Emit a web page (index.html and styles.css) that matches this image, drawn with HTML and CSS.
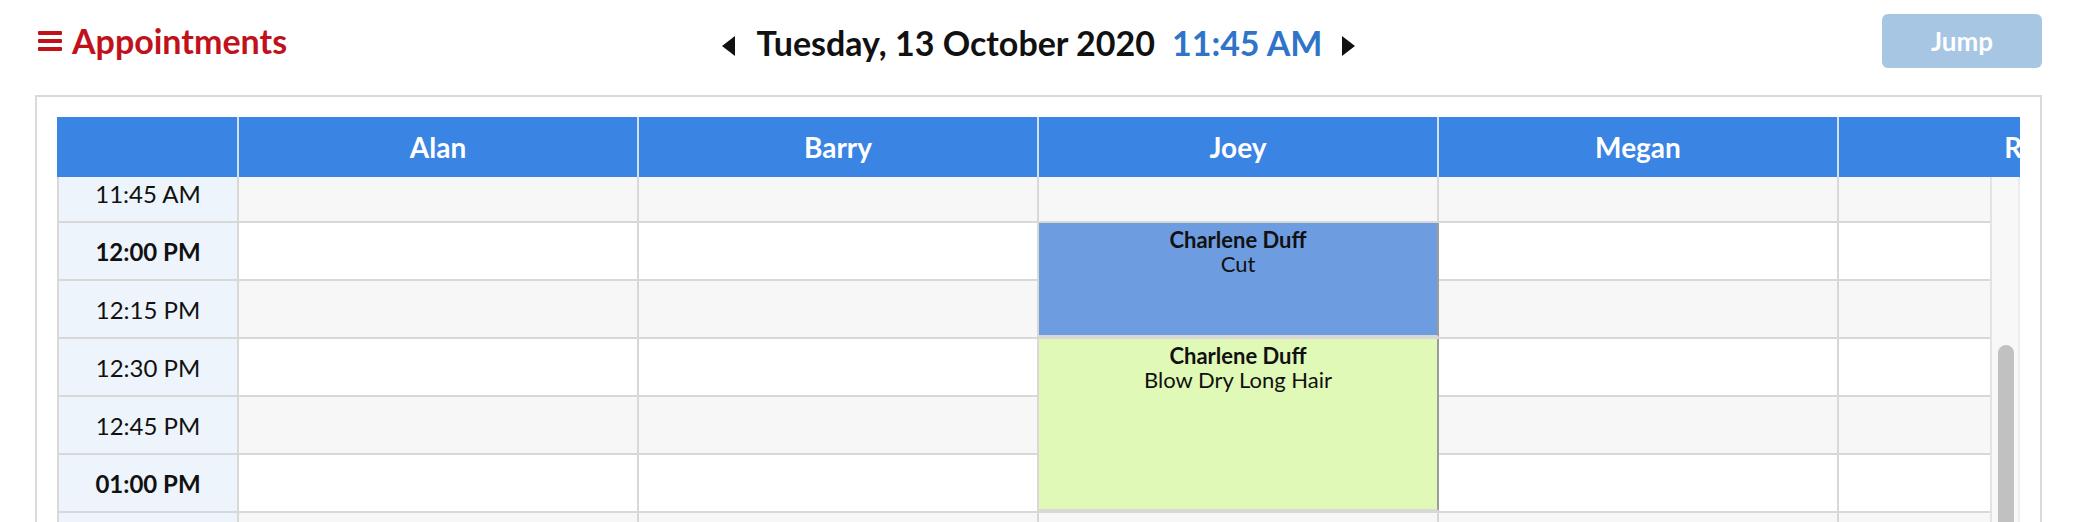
FILE: index.html
```html
<!doctype html>
<html>
<head>
  <title>Appointments</title>
  <meta charset="utf-8">
  <link rel="stylesheet" href="styles.css">
</head>
<body>
  <div id="page">
    <div id="topbar">
      <h1 class="title">
        <svg class="bars" width="24" height="20" viewBox="0 0 24 20"><rect y="0" width="24" height="4" rx="1"/><rect y="8" width="24" height="4" rx="1"/><rect y="16" width="24" height="4" rx="1"/></svg>
        <span>Appointments</span>
      </h1>
      <div class="datenav">
        <a class="arrow" href="#"><svg width="13" height="20" viewBox="0 0 13 20"><path d="M13 0 L0 10 L13 20 Z"/></svg></a><span class="date">Tuesday, 13 October 2020</span><span class="time">11:45 AM</span><a class="arrow" href="#"><svg width="13" height="20" viewBox="0 0 13 20"><path d="M0 0 L13 10 L0 20 Z"/></svg></a>
      </div>
      <div class="actions"><button class="jump" disabled>Jump</button></div>
    </div>
    <div class="calendar">
      <div class="cal-head" id="calHead">
        <div class="head-cell corner"></div>
      </div>
      <div class="cal-body">
        <div class="viewport" id="viewport">
          <div class="times" id="times"></div>
        </div>
        <div class="scrollbar"><div class="thumb" id="thumb"></div></div>
      </div>
    </div>
  </div>
  <script>
    const staff = ["Alan", "Barry", "Joey", "Megan", "Rosie"];
    const appointments = [
      { staff: "Joey", start: 12 * 60, slots: 2, client: "Charlene Duff", service: "Cut", kind: "cut" },
      { staff: "Joey", start: 12 * 60 + 30, slots: 3, client: "Charlene Duff", service: "Blow Dry Long Hair", kind: "blowdry" }
    ];
    const SLOT = 58, FIRST = 9 * 60, COUNT = 48;

    const calHead = document.querySelector("#calHead"),
      viewport = document.querySelector("#viewport"),
      times = viewport.querySelector("#times"),
      thumb = document.querySelector("#thumb");

    function pad(n){
      return n < 10 ? "0" + n : "" + n;
    }

    function label(min){
      const h = Math.floor(min / 60), m = min % 60;
      const h12 = h % 12 || 12;
      return pad(h12) + ":" + pad(m) + (h < 12 ? " AM" : " PM");
    }

    function buildTimes(){
      for(let i = 0; i < COUNT; i++){
        const min = FIRST + i * 15;
        const cell = document.createElement("div");
        cell.className = "time-cell" + (min % 60 === 0 ? " hour" : "");
        cell.innerText = label(min);
        times.appendChild(cell);
      }
    }

    function buildColumn(name){
      const head = document.createElement("div");
      head.className = "head-cell";
      head.innerText = name;
      calHead.appendChild(head);

      const col = document.createElement("div");
      col.className = "staff-col";
      for(let i = 0; i < COUNT; i++){
        const min = FIRST + i * 15;
        const slot = document.createElement("div");
        slot.className = "slot" + (min % 30 === 15 ? " odd" : "");
        col.appendChild(slot);
      }
      appointments.filter(function(a){ return a.staff === name; }).forEach(function(a){
        const box = document.createElement("div");
        const idx = (a.start - FIRST) / 15;
        box.className = "appt " + a.kind;
        box.style.top = idx * SLOT + "px";
        box.style.height = a.slots * SLOT - 2 + "px";
        box.innerHTML = "<b>" + a.client + "</b>" + a.service;
        col.appendChild(box);
      });
      viewport.appendChild(col);
    }

    function syncThumb(){
      const track = viewport.clientHeight;
      const total = COUNT * SLOT;
      thumb.style.marginTop = viewport.scrollTop / total * track + "px";
      thumb.style.height = track / total * track + "px";
    }

    function init(){
      buildTimes();
      staff.forEach(buildColumn);
      // scroll to the current time (11:45 AM)
      viewport.scrollTop = ((11 * 60 + 45 - FIRST) / 15) * SLOT + 12;
      syncThumb();
    }
    init();
  </script>
</body>
</html>
```

FILE: styles.css
```css
html, body {
  margin: 0;
  overflow: hidden;
}
body {
  font-family: Lato, "Open Sans", sans-serif;
  color: #111;
  background: #fff;
}
#page {
  padding: 14px 40px 0 35px;
}
#topbar {
  display: grid;
  grid-template-columns: 1fr auto 1fr;
  align-items: center;
  height: 54px;
  margin-bottom: 27px;
}
.title {
  align-self: start;
  display: flex;
  align-items: center;
  gap: 10px;
  margin: 7px 0 0 3px;
  font-size: 34px;
  font-weight: 700;
  line-height: 1.2;
  color: #c1121c;
}
.title svg {
  fill: currentColor;
}
.datenav {
  font-size: 34px;
  font-weight: 700;
  white-space: nowrap;
  margin-top: 2px;
}
.arrow svg {
  fill: #111;
}
.date {
  margin: 0 17px 0 22px;
}
.time {
  color: #2f74c8;
  margin-right: 20px;
}
.actions {
  justify-self: end;
}
.jump {
  display: block;
  width: 160px;
  height: 54px;
  border: 0;
  border-radius: 6px;
  background: #a6c6e3;
  color: #fff;
  font: 700 26px Lato, sans-serif;
}

.calendar {
  border: 2px solid #dadada;
  padding: 20px;
}
.cal-head {
  display: flex;
  height: 60px;
  background: #3a84e3;
  overflow: hidden;
}
.head-cell {
  flex: 0 0 400px;
  box-sizing: border-box;
  border-right: 2px solid #d3dff0;
  display: flex;
  align-items: center;
  justify-content: center;
  color: #fff;
  font-size: 28px;
  font-weight: 700;
}
.head-cell.corner {
  flex-basis: 182px;
}
.cal-body {
  display: flex;
  height: 720px;
}
.viewport {
  flex: 1;
  display: flex;
  overflow: hidden;
}
.scrollbar {
  flex: 0 0 30px;
  box-sizing: border-box;
  background: #f8f8f8;
  border-left: 2px solid #e3e3e3;
  border-right: 2px solid #ececec;
}
.thumb {
  width: 16px;
  margin-left: 6px;
  border-radius: 8px;
  background: #c1c1c1;
}
.times {
  flex: 0 0 182px;
}
.time-cell {
  height: 58px;
  box-sizing: border-box;
  border-left: 2px solid #d8d8d8;
  border-right: 2px solid #d8d8d8;
  border-bottom: 2px solid #d8d8d8;
  background: #edf4fb;
  display: flex;
  align-items: center;
  justify-content: center;
  font-size: 24px;
}
.time-cell.hour {
  font-weight: 700;
}
.staff-col {
  flex: 0 0 400px;
  position: relative;
}
.slot {
  height: 58px;
  box-sizing: border-box;
  border-right: 2px solid #d8d8d8;
  border-bottom: 2px solid #d8d8d8;
  background: #fff;
}
.slot.odd {
  background: #f7f7f7;
}
.appt {
  position: absolute;
  left: 0;
  right: 0;
  box-sizing: border-box;
  border-right: 2px solid #9c9c9c;
  border-bottom: 2px solid #d8d8d8;
  padding-top: 5px;
  text-align: center;
  font-size: 22px;
  line-height: 24px;
}
.appt b {
  display: block;
}
.appt.cut {
  background: #6d9ce0;
}
.appt.blowdry {
  background: #e0f9b6;
}
```
